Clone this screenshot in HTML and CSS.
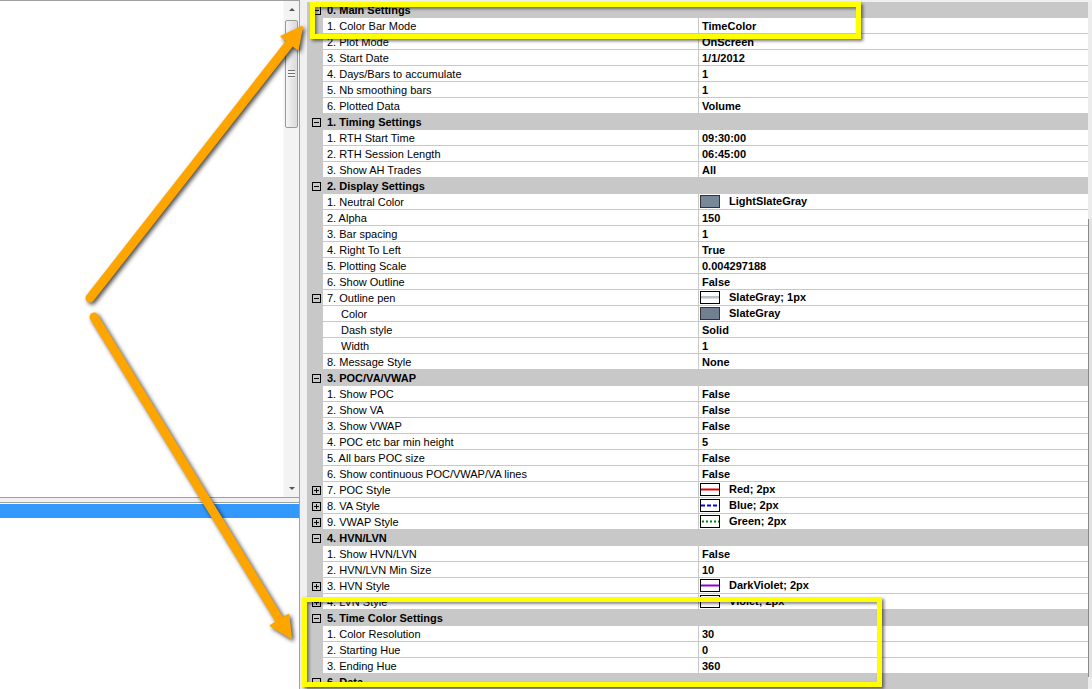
FILE: index.html
```html
<!DOCTYPE html>
<html lang="en">
<head>
    <meta charset="UTF-8">
    <title>Indicator Properties</title>
    <link rel="stylesheet" href="styles.css">
</head>
<body>
    <div class="window">
        <div class="side">
            <div class="pane pane-top">
                <div class="vscroll">
                    <div class="sb-btn sb-up"></div>
                    <div class="sb-thumb"><span class="grip"></span></div>
                    <div class="sb-space"></div>
                    <div class="sb-btn sb-down"></div>
                </div>
            </div>
            <div class="pane-gap"></div>
            <div class="pane pane-bottom">
                <div class="row-selected"></div>
            </div>
        </div>

        <div class="grid-area">
            <div class="grid">
                <div class="cat"><span class="toggle minus"></span>0. Main Settings</div>
                <div class="prop"><span class="gut"></span><span class="name">1. Color Bar Mode</span><span class="val">TimeColor</span></div>
                <div class="prop"><span class="gut"></span><span class="name">2. Plot Mode</span><span class="val">OnScreen</span></div>
                <div class="prop"><span class="gut"></span><span class="name">3. Start Date</span><span class="val">1/1/2012</span></div>
                <div class="prop"><span class="gut"></span><span class="name">4. Days/Bars to accumulate</span><span class="val">1</span></div>
                <div class="prop"><span class="gut"></span><span class="name">5. Nb smoothing bars</span><span class="val">1</span></div>
                <div class="prop"><span class="gut"></span><span class="name">6. Plotted Data</span><span class="val">Volume</span></div>

                <div class="cat"><span class="toggle minus"></span>1. Timing Settings</div>
                <div class="prop"><span class="gut"></span><span class="name">1. RTH Start Time</span><span class="val">09:30:00</span></div>
                <div class="prop"><span class="gut"></span><span class="name">2. RTH Session Length</span><span class="val">06:45:00</span></div>
                <div class="prop"><span class="gut"></span><span class="name">3. Show AH Trades</span><span class="val">All</span></div>

                <div class="cat"><span class="toggle minus"></span>2. Display Settings</div>
                <div class="prop"><span class="gut"></span><span class="name">1. Neutral Color</span><span class="val has-icon"><span class="swatch swatch-lsg"></span>LightSlateGray</span></div>
                <div class="prop"><span class="gut"></span><span class="name">2. Alpha</span><span class="val">150</span></div>
                <div class="prop"><span class="gut"></span><span class="name">3. Bar spacing</span><span class="val">1</span></div>
                <div class="prop"><span class="gut"></span><span class="name">4. Right To Left</span><span class="val">True</span></div>
                <div class="prop"><span class="gut"></span><span class="name">5. Plotting Scale</span><span class="val">0.004297188</span></div>
                <div class="prop"><span class="gut"></span><span class="name">6. Show Outline</span><span class="val">False</span></div>
                <div class="prop"><span class="gut"><span class="toggle minus"></span></span><span class="name">7. Outline pen</span><span class="val has-icon">
                    <svg class="pen" width="20" height="13" viewBox="0 0 20 13"><rect x="0.5" y="0.5" width="19" height="12" fill="#fff" stroke="#000"/><line x1="1" y1="6" x2="19" y2="6" stroke="#708090" stroke-width="1"/><line x1="1" y1="7" x2="19" y2="7" stroke="#b8c0c8" stroke-width="1"/></svg>SlateGray; 1px</span></div>
                <div class="prop"><span class="gut"></span><span class="name sub">Color</span><span class="val has-icon"><span class="swatch swatch-sg"></span>SlateGray</span></div>
                <div class="prop"><span class="gut"></span><span class="name sub">Dash style</span><span class="val">Solid</span></div>
                <div class="prop"><span class="gut"></span><span class="name sub">Width</span><span class="val">1</span></div>
                <div class="prop"><span class="gut"></span><span class="name">8. Message Style</span><span class="val">None</span></div>

                <div class="cat"><span class="toggle minus"></span>3. POC/VA/VWAP</div>
                <div class="prop"><span class="gut"></span><span class="name">1. Show POC</span><span class="val">False</span></div>
                <div class="prop"><span class="gut"></span><span class="name">2. Show VA</span><span class="val">False</span></div>
                <div class="prop"><span class="gut"></span><span class="name">3. Show VWAP</span><span class="val">False</span></div>
                <div class="prop"><span class="gut"></span><span class="name">4. POC etc bar min height</span><span class="val">5</span></div>
                <div class="prop"><span class="gut"></span><span class="name">5. All bars POC size</span><span class="val">False</span></div>
                <div class="prop"><span class="gut"></span><span class="name">6. Show continuous POC/VWAP/VA lines</span><span class="val">False</span></div>
                <div class="prop"><span class="gut"><span class="toggle plus"></span></span><span class="name">7. POC Style</span><span class="val has-icon">
                    <svg class="pen" width="20" height="13" viewBox="0 0 20 13"><rect x="0.5" y="0.5" width="19" height="12" fill="#fff" stroke="#000"/><line x1="1" y1="6.5" x2="19" y2="6.5" stroke="#e00000" stroke-width="2"/></svg>Red; 2px</span></div>
                <div class="prop"><span class="gut"><span class="toggle plus"></span></span><span class="name">8. VA Style</span><span class="val has-icon">
                    <svg class="pen" width="20" height="13" viewBox="0 0 20 13"><rect x="0.5" y="0.5" width="19" height="12" fill="#fff" stroke="#000"/><line x1="1" y1="6.5" x2="19" y2="6.5" stroke="#0000ff" stroke-width="2" stroke-dasharray="4 2"/></svg>Blue; 2px</span></div>
                <div class="prop"><span class="gut"><span class="toggle plus"></span></span><span class="name">9. VWAP Style</span><span class="val has-icon">
                    <svg class="pen" width="20" height="13" viewBox="0 0 20 13"><rect x="0.5" y="0.5" width="19" height="12" fill="#fff" stroke="#000"/><line x1="2" y1="6.5" x2="19" y2="6.5" stroke="#008000" stroke-width="2" stroke-dasharray="2 2"/></svg>Green; 2px</span></div>

                <div class="cat"><span class="toggle minus"></span>4. HVN/LVN</div>
                <div class="prop"><span class="gut"></span><span class="name">1. Show HVN/LVN</span><span class="val">False</span></div>
                <div class="prop"><span class="gut"></span><span class="name">2. HVN/LVN Min Size</span><span class="val">10</span></div>
                <div class="prop"><span class="gut"><span class="toggle plus"></span></span><span class="name">3. HVN Style</span><span class="val has-icon">
                    <svg class="pen" width="20" height="13" viewBox="0 0 20 13"><rect x="0.5" y="0.5" width="19" height="12" fill="#fff" stroke="#000"/><line x1="1" y1="6.5" x2="19" y2="6.5" stroke="#9400d3" stroke-width="2"/></svg>DarkViolet; 2px</span></div>
                <div class="prop"><span class="gut"><span class="toggle plus"></span></span><span class="name">4. LVN Style</span><span class="val has-icon">
                    <svg class="pen" width="20" height="13" viewBox="0 0 20 13"><rect x="0.5" y="0.5" width="19" height="12" fill="#fff" stroke="#000"/><line x1="1" y1="6.5" x2="19" y2="6.5" stroke="#ee82ee" stroke-width="2"/></svg>Violet; 2px</span></div>

                <div class="cat"><span class="toggle minus"></span>5. Time Color Settings</div>
                <div class="prop"><span class="gut"></span><span class="name">1. Color Resolution</span><span class="val">30</span></div>
                <div class="prop"><span class="gut"></span><span class="name">2. Starting Hue</span><span class="val">0</span></div>
                <div class="prop"><span class="gut"></span><span class="name">3. Ending Hue</span><span class="val">360</span></div>

                <div class="cat"><span class="toggle minus"></span>6. Data</div>
            </div>
            <div class="grid-scroll"><div class="grid-thumb"></div></div>
        </div>

        <!-- highlight frames and callout arrows drawn over the panels -->
        <div class="mark mark-top"></div>
        <div class="mark mark-bottom"></div>

        <svg class="arrows" width="1092" height="689" viewBox="0 0 1092 689">
            <g class="arrow">
                <line x1="90" y1="298" x2="289" y2="44"/>
                <polygon points="302,27 281.5,36.5 297.8,49.2"/>
            </g>
            <g class="arrow">
                <line x1="94" y1="317" x2="279" y2="619"/>
                <polygon points="291,638 270.8,625.6 288.4,614.8"/>
            </g>
        </svg>
    </div>
</body>
</html>
```

FILE: styles.css
```css
:root {
    --panel-bg: #f0f0f0;
    --border: #a0a0a0;
    --cat-bg: #c8c8c8;
    --line: #c8c8c8;
    --select: #3399ff;
    --mark: #ffff00;
    --arrow: #ffa500;
}

body {
    margin: 0;
    font-family: 'Liberation Sans', Arial, sans-serif;
    font-size: 11px;
    color: #000;
    background-color: var(--panel-bg);
    overflow: hidden;
}

.window {
    position: relative;
    display: flex;
    width: 1092px;
    height: 689px;
    overflow: hidden;
}

/* left side: two list panes */
.side {
    width: 300px;
    flex-shrink: 0;
    display: flex;
    flex-direction: column;
    border-right: 1px solid var(--border);
    box-sizing: border-box;
}

.pane {
    background-color: #fff;
    box-sizing: border-box;
}

.pane-top {
    height: 498px;
    border-top: 1px solid var(--border);
    border-bottom: 1px solid var(--border);
    display: flex;
    justify-content: flex-end;
}

.pane-gap {
    height: 4px;
}

.pane-bottom {
    flex: 1;
    border-top: 1px solid var(--border);
}

.row-selected {
    margin-top: 1px;
    height: 14px;
    background-color: var(--select);
}

.vscroll {
    width: 16px;
    display: flex;
    flex-direction: column;
    align-items: center;
    background-color: #f3f3f3;
    border-left: 1px solid #f9f9f9;
    box-sizing: border-box;
}

.sb-btn {
    width: 100%;
    height: 17px;
    display: flex;
    align-items: center;
    justify-content: center;
}

.sb-up::before,
.sb-down::before {
    content: "";
    border-left: 3px solid transparent;
    border-right: 3px solid transparent;
}

.sb-up::before {
    border-bottom: 3px solid #555;
}

.sb-down::before {
    border-top: 3px solid #555;
}

.sb-thumb {
    width: 13px;
    height: 108px;
    margin-top: 2px;
    border: 1px solid #9b9b9b;
    border-radius: 2px;
    background: linear-gradient(to right, #f6f6f6, #e4e4e4 60%, #dadada);
    box-sizing: border-box;
    display: flex;
    align-items: center;
    justify-content: center;
}

.grip {
    width: 7px;
    height: 8px;
    background: repeating-linear-gradient(to bottom, #707070 0, #707070 1px, #f4f4f4 1px, #f4f4f4 3px);
}

.sb-space {
    flex: 1;
}

/* right side: property grid */
.grid-area {
    flex: 1;
    display: flex;
    padding-left: 7px;
    padding-top: 2px;
    border-top: 1px solid var(--border);
    box-sizing: border-box;
    height: 100%;
    margin-top: -1px;
}

.grid {
    flex: 1;
    background-color: #fff;
}

.grid-scroll {
    width: 4px;
    background-color: #ececec;
    padding-top: 217px;
    box-sizing: border-box;
}

.grid-thumb {
    height: 458px;
    border-left: 1px solid #8a8a8a;
    background-color: #e2e2e2;
}

.cat {
    height: 16px;
    line-height: 17px;
    background-color: var(--cat-bg);
    font-weight: bold;
    display: flex;
    align-items: center;
    padding-left: 5px;
    white-space: nowrap;
}

.cat .toggle {
    margin-right: 6px;
}

.prop {
    height: 16px;
    display: flex;
}

.gut {
    width: 16px;
    flex-shrink: 0;
    background-color: var(--cat-bg);
    display: flex;
    align-items: center;
    padding-left: 5px;
    box-sizing: border-box;
}

.name,
.val {
    height: 16px;
    line-height: 17px;
    border-bottom: 1px solid var(--line);
    box-sizing: border-box;
    white-space: nowrap;
    overflow: hidden;
}

.name {
    width: 376px;
    flex-shrink: 0;
    padding-left: 4px;
    border-right: 1px solid var(--line);
}

.name.sub {
    padding-left: 18px;
}

.val {
    flex: 1;
    padding-left: 3px;
    font-weight: bold;
}

.val.has-icon {
    padding-left: 1px;
    display: flex;
    align-items: center;
}

.swatch {
    width: 20px;
    height: 13px;
    border: 1px solid #333;
    box-sizing: border-box;
    margin-right: 9px;
    flex-shrink: 0;
}

.swatch-lsg {
    background-color: #778899;
}

.swatch-sg {
    background-color: #708090;
}

.pen {
    flex-shrink: 0;
    margin-right: 9px;
}

.toggle {
    position: relative;
    width: 9px;
    height: 9px;
    border: 1px solid #000;
    box-sizing: border-box;
    flex-shrink: 0;
}

.toggle::before {
    content: "";
    position: absolute;
    left: 1px;
    top: 3px;
    width: 5px;
    height: 1px;
    background-color: #000;
}

.toggle.plus::after {
    content: "";
    position: absolute;
    left: 3px;
    top: 1px;
    width: 1px;
    height: 5px;
    background-color: #000;
}

/* callout frames */
.mark {
    position: absolute;
    border: 5px solid var(--mark);
    box-sizing: border-box;
    box-shadow: 2px 2px 3px rgba(0, 0, 0, 0.55), inset 2px 2px 3px rgba(0, 0, 0, 0.45);
}

.mark-top {
    left: 310px;
    top: 2px;
    width: 551px;
    height: 37px;
}

.mark-bottom {
    left: 302px;
    top: 597px;
    width: 580px;
    height: 90px;
}

.arrows {
    position: absolute;
    left: 0;
    top: 0;
    pointer-events: none;
}

.arrow {
    filter: drop-shadow(2px 2px 2px rgba(0, 0, 0, 0.7));
}

.arrow line {
    stroke: var(--arrow);
    stroke-width: 9;
    stroke-linecap: round;
}

.arrow polygon {
    fill: var(--arrow);
    stroke: var(--arrow);
    stroke-width: 2;
    stroke-linejoin: round;
}
```
